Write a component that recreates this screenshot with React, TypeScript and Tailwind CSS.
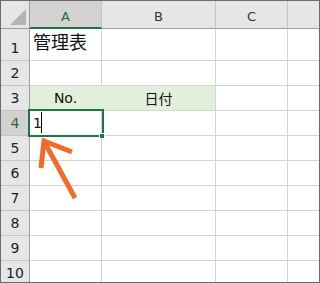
import { ReactNode } from "react";

// Column widths include the 1px gridline on the right
const COLS = [
  { key: "A", w: "w-[72px]" },
  { key: "B", w: "w-[114px]" },
  { key: "C", w: "w-[72px]" },
  { key: "", w: "w-[31px]" },
];

const ROWS = [1, 2, 3, 4, 5, 6, 7, 8, 9, 10];

const numFont = { fontFamily: '"DejaVu Sans", "Liberation Sans", sans-serif' };
const cellFont = { fontFamily: '"DejaVu Sans", "Noto Sans CJK JP", sans-serif' };

function ColHeader({ label, w, selected, last }: { label: string; w: string; selected?: boolean; last?: boolean }) {
  return (
    <div
      className={`${w} h-[28px] shrink-0 flex items-end justify-center text-[13px] leading-[13px] ${
        selected
          ? "bg-[#d2d2d2] text-[#1e6b40] border-b-2 border-b-[#217346] pb-[4px]"
          : "bg-[#e6e6e6] text-[#333] border-b border-b-[#9e9e9e] pb-[5px]"
      } ${last ? "" : "border-r border-r-[#c4c4c4]"}`}
      style={numFont}
    >
      {label}
    </div>
  );
}

function RowHeader({ n }: { n: number }) {
  const selected = n === 4;
  return (
    <div
      className={`w-[29px] shrink-0 border-r border-r-[#9e9e9e] border-b border-b-[#c4c4c4] flex items-end justify-center pb-[5px] text-[14px] leading-[14px] ${
        selected ? "bg-[#d2d2d2] text-[#1e6b40]" : "bg-[#e6e6e6] text-[#222]"
      }`}
      style={numFont}
    >
      {n}
    </div>
  );
}

function Cell({ w, children, green, greenRight, last, className = "" }: {
  w: string;
  children?: ReactNode;
  green?: boolean;
  greenRight?: boolean;
  last?: boolean;
  className?: string;
}) {
  return (
    <div
      className={`${w} shrink-0 border-b border-b-[#d4d4d4] ${last ? "" : "border-r"} ${
        greenRight ? "border-r-[#e2efda]" : "border-r-[#d4d4d4]"
      } ${green ? "bg-[#e2efda]" : "bg-white"} flex text-[#111] ${className}`}
      style={cellFont}
    >
      {children}
    </div>
  );
}

function cellContent(row: number, col: string): { node?: ReactNode; cls?: string } {
  if (row === 1 && col === "A")
    return {
      node: <span className="text-[18px] leading-[18px]" style={{ fontFamily: '"Noto Sans CJK JP", sans-serif' }}>管理表</span>,
      cls: "items-start pt-[3px] pl-[3px]",
    };
  if (row === 3 && col === "A") return { node: <span className="text-[14px] leading-[14px]">No.</span>, cls: "items-center justify-center" };
  if (row === 3 && col === "B")
    return {
      node: <span className="text-[14px] leading-[14px]" style={{ fontFamily: '"Noto Sans CJK JP", sans-serif' }}>日付</span>,
      cls: "items-center justify-center",
    };
  if (row === 4 && col === "A") return { node: <span className="text-[14px] leading-[14px]">1</span>, cls: "items-center pl-[3px]" };
  return {};
}

export default function App() {
  return (
    <div className="relative w-[320px] h-[283px] border border-[#6b6b6b] overflow-hidden bg-white">
      {/* header row */}
      <div className="flex">
        <div className="w-[29px] h-[28px] shrink-0 bg-[#e6e6e6] border-r border-r-[#9e9e9e] border-b border-b-[#9e9e9e] relative">
          <svg className="absolute left-0 top-0" width="28" height="27" viewBox="0 0 28 27">
            <polygon points="9,24 25,24 25,8" fill="#b4b4b4" />
          </svg>
        </div>
        {COLS.map((c, i) => (
          <ColHeader key={i} label={c.key} w={c.w} selected={c.key === "A"} last={i === COLS.length - 1} />
        ))}
      </div>

      {ROWS.map((r) => (
        <div key={r} className={`flex ${r === 1 ? "h-[32px]" : "h-[25px]"}`}>
          <RowHeader n={r} />
          {COLS.map((c, i) => {
            const { node, cls } = cellContent(r, c.key);
            return (
              <Cell
                key={i}
                w={c.w}
                green={r === 3 && (c.key === "A" || c.key === "B")}
                greenRight={r === 3 && c.key === "A"}
                last={i === COLS.length - 1}
                className={cls}
              >
                {node}
              </Cell>
            );
          })}
        </div>
      ))}

      {/* active cell A4 */}
      <div className="absolute left-[27px] top-[108px] w-[76px] h-[28px] border-2 border-[#217346]" />
      <div className="absolute left-[98px] top-[132px] w-[6px] h-[6px] bg-[#217346] border border-white" />
      {/* edit caret */}
      <div className="absolute left-[40px] top-[111px] w-px h-[21px] bg-black" />

      {/* pointer arrow */}
      <svg className="absolute left-0 top-0 pointer-events-none" width="320" height="283" viewBox="0 0 320 283">
        <path d="M40 167 L43 140 L71 151" fill="none" stroke="#f26b2b" strokeWidth="5" strokeLinejoin="miter" />
        <path d="M44 142 L74 197" fill="none" stroke="#f26b2b" strokeWidth="5" />
      </svg>
    </div>
  );
}
